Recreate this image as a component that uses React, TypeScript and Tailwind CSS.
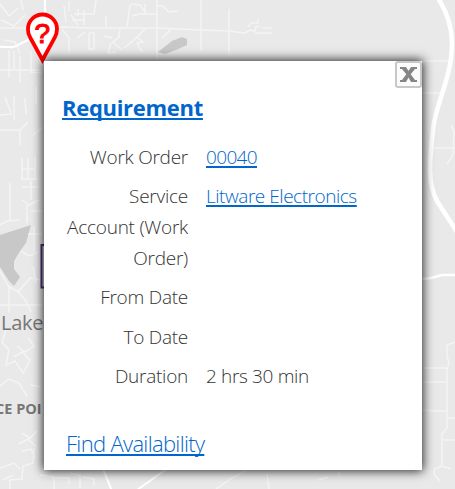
const fields = [
  { label: 'Work Order', value: '00040', link: true, track: 'tracking-[-0.65px]' },
  { label: 'Service Account (Work Order)', value: 'Litware Electronics', link: true, track: 'tracking-[-0.46px]' },
  { label: 'From Date', value: '', link: false, track: '' },
  { label: 'To Date', value: '', link: false, track: '' },
  { label: 'Duration', value: '2 hrs 30 min', link: false, track: 'tracking-[-0.35px]' },
];

function MapBackdrop() {
  return (
    <svg className="absolute inset-0" width="455" height="489" viewBox="0 0 455 489" fill="none">
      <g fill="#c8c8c8">
        <path d="M158 52 172 41 182 37 187 39V45L176 50 165 54Z" />
        <path d="M0 235 31 225 26 243 20 251 14 261V269L20 277 14 286 9 281 0 267Z" />
      </g>
      <g stroke="#f4f4f4" strokeWidth="1.5">
        <path d="M0 28H38L62 27 90 28H146L160 28 200 30 228 31 245 33 250 30 255 31 256 26 260 27M255 33H272M262 28 272 28M248 27 251 23H258V19M157 0V59M201 0V51M229 9V55M130 5 127 27M106 16V27" />
        <path d="M69 1V11M74 14H94L96 0M84 10V25M71 15 78 25M72 20H85M78 9V16M89 33H94V49H89V33M131 4 140 5 145 12V4M132 16 139 14H157M157 6 163 6 169 12 178 11M162 38 171 29M146 28 134 40 124 48M137 37 143 42 137 43 142 52M120 28 119 37 113 42 121 49M104 36 112 38M111 43 108 53 116 52M62 29 69 38V53M77 38 85 32M64 6 66 22" />
        <path d="M0 4 9 16 18 8M1 20 14 26 25 15M21 0 23 10M4 40 15 42 20 53M0 46 13 48M0 70H43M9 50V77M20 56V83M14 69V51M0 115 12 114M5 97 11 113M14 96V120M25 98 26 114M0 130H20L28 122M20 130V145M33 135 43 127M31 51V72L42 73M36 87V104" />
        <path d="M22 158V179H38M22 169H35M28 158V178M35 157V181M22 187H39M10 183V220M0 225 7 221 20 220M22 200 29 205 39 200M27 205V223M31 211H42M31 181V200M34 226V252M28 234H42M21 251 29 256 38 252M0 271 8 286 18 292 30 278 42 280M9 285V313M0 305H42M17 290 26 301 31 312M33 267 36 283" />
        <path d="M6 330 2 342 9 350 6 365 15 361 23 373 30 360 22 352 14 357M17 346 25 352 34 346 28 338M0 386 9 379 19 383 27 396M30 385 41 387M22 433 30 438 37 431M19 444 28 439 36 447M22 451 31 449 35 458M10 489V480L22 479 23 466 33 463 34 448M0 468 14 463 20 469M40 475 54 477V489M52 478H69V484M70 473 80 475V488M82 477 94 479V486M3 480 13 475" />
        <path d="M216 489 232 478 247 470M267 474 269 489M319 480 328 477M339 472V477" />
        <path d="M422 61H451M422 93H440M434 148H455M451 125 454 132 453 155 447 164M422 368H447M422 382H447M422 410 435 411H447M447 418H455M455 342 447 345V356L449 363 447 369V428L442 434V466M442 440H455M451 469 442 466 434 469V474L440 481" />
      </g>
      <g stroke="#fff" strokeLinecap="round">
        <path d="M0 47H14L28 40 45 31V0" strokeWidth="2.2" />
        <path d="M438 -2Q452 20 452 43C452 78 435 105 433 130C429 164 428 184 437 201L457 232" strokeWidth="4.5" />
        <path d="M422 279 431 278 442 275H457" strokeWidth="2.5" />
        <path d="M103 469 112 491M137 490 168 468" strokeWidth="2" />
      </g>
      <rect x="41.5" y="245" width="60" height="42.5" stroke="#50307d" strokeWidth="2" />
    </svg>
  );
}

function Pin() {
  return (
    <svg className="absolute left-[25px] top-[12px]" width="35" height="53" viewBox="0 0 35 53">
      <path d="M17.5 48 5.2 25.5C2.5 21 3 18 3 17a14.5 14.5 0 0 1 29 0C32 20 31 23 29.8 25.5Z" fill="#fff" stroke="#ff0000" strokeWidth="3.8" />
      <text x="17.4" y="30.5" textAnchor="middle" fontFamily="Liberation Sans, sans-serif" fontSize="28" fill="#ff0000" stroke="#ff0000" strokeWidth="1.1">?</text>
    </svg>
  );
}

export default function App() {
  return (
    <main className="relative h-[489px] w-[455px] overflow-hidden bg-[#e9e9e9] pl-[44px] pt-[61px] font-['Open_Sans',sans-serif]">
      <MapBackdrop />
      <span className="absolute left-px top-[309px] text-[20px] font-medium leading-7 tracking-[-0.3px] text-[#777]">Lake</span>
      <span className="absolute left-[-5px] top-[399px] whitespace-nowrap text-[14.5px] font-bold leading-5 text-[#777]">CE POI</span>
      <Pin />
      <section className="relative z-10 h-[409px] w-[378px] bg-white pl-[18px] pt-[29px] shadow-[0_0_10px_1px_rgba(0,0,0,0.85)]">
        <button aria-label="Close" className="absolute right-0 top-0 flex h-[27px] w-[27px] items-center justify-center rounded-[3px] border-2 border-[#c8c8c8] bg-[#fbfbfb]">
          <svg width="17" height="16" viewBox="0 0 17 16" fill="#858585">
            <path d="M0 0H6L8.5 4 11 0H17V2H15L10.7 7.2 15 13H17V15H11L8.5 10.5 6 15H0V13H2L6.3 7.2 2 2H0Z" />
          </svg>
        </button>
        <h1 className="h-[52px] text-[22px] font-bold leading-[34px] tracking-[-0.3px] text-[#0066cc]">
          <a href="#" className="underline decoration-2 underline-offset-[2px] [text-decoration-skip-ink:none]">Requirement</a>
        </h1>
        <dl className="flex flex-col gap-[8.24px] text-[19px] font-light leading-[31px] text-[#333]">
          {fields.map((f) => (
            <div key={f.label} className="flex gap-[18px]">
              <dt className="w-[126px] text-right tracking-[-0.25px]">{f.label}</dt>
              <dd className={f.track}>
                {f.link ? <a href="#" className="text-[#0066cc] underline decoration-2 underline-offset-[2px]">{f.value}</a> : f.value}
              </dd>
            </div>
          ))}
        </dl>
        <a href="#" className="ml-[4px] mt-[33.6px] inline-block text-[22px] font-light leading-[34px] tracking-[-0.68px] text-[#0066cc] underline decoration-2 underline-offset-[2px] [text-decoration-skip-ink:none]">
          Find Availability
        </a>
      </section>
    </main>
  );
}
